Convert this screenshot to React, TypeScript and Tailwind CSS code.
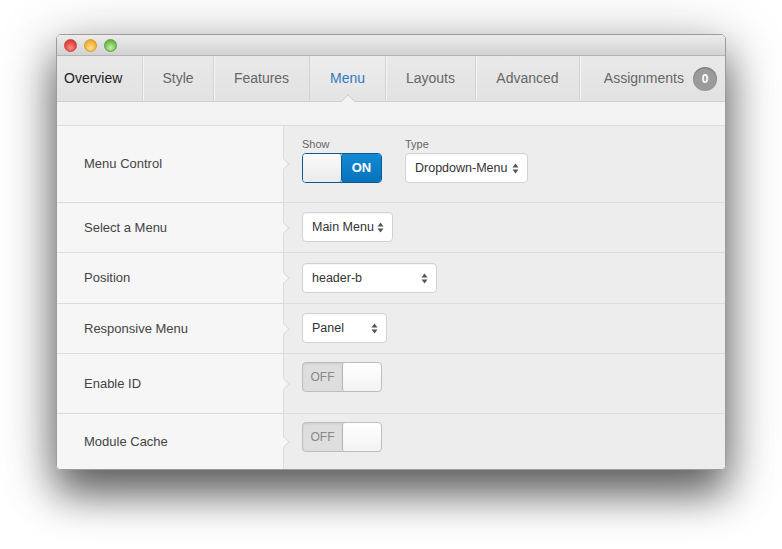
import type { ReactNode } from 'react';

const tabs = [
  { name: 'Overview', w: 'w-[86px]', cls: 'justify-start pl-[7px] text-[#222]' },
  { name: 'Style', w: 'w-[71px]', cls: 'justify-center text-[#666]' },
  { name: 'Features', w: 'w-[96px]', cls: 'justify-center text-[#666]' },
  { name: 'Menu', w: 'w-[76px]', cls: 'justify-center text-[#3479bd]', active: true },
  { name: 'Layouts', w: 'w-[90px]', cls: 'justify-center text-[#666]' },
  { name: 'Advanced', w: 'w-[104px]', cls: 'justify-center text-[#666]' },
];

function SelectArrows() {
  return (
    <svg width="7" height="11" viewBox="0 0 7 11" className="shrink-0">
      <path d="M3.5 0.5 L6.5 4.5 L0.5 4.5 Z" fill="#555" />
      <path d="M3.5 10.5 L6.5 6.5 L0.5 6.5 Z" fill="#555" />
    </svg>
  );
}

function Select({ value, width }: { value: string; width: string }) {
  return (
    <div
      className={`${width} h-[30px] flex items-center justify-between pl-[9px] pr-[8px] bg-white border border-[#d2d2d2] rounded-[4px] shadow-[inset_0_1px_1px_rgba(0,0,0,0.04)] text-[12.5px] text-[#333]`}
    >
      <span>{value}</span>
      <SelectArrows />
    </div>
  );
}

function ToggleOn() {
  return (
    <div className="w-[80px] h-[30px] flex rounded-[4px] border border-[#0b5a92] overflow-hidden">
      <div className="w-[39px] h-full bg-gradient-to-b from-[#fbfbfb] to-[#eaeaea] border-r border-[#0b5a92] rounded-r-[3px]" />
      <div className="flex-1 flex items-center justify-center bg-gradient-to-b from-[#148ad6] to-[#0672bb] text-white text-[13px] font-bold">
        ON
      </div>
    </div>
  );
}

function ToggleOff() {
  return (
    <div className="w-[80px] h-[30px] flex rounded-[4px] border border-[#bdbdbd] overflow-hidden bg-[#dedede]">
      <div className="w-[39px] flex items-center justify-center text-[12px] text-[#888] shadow-[inset_0_1px_2px_rgba(0,0,0,0.08)]">
        OFF
      </div>
      <div className="flex-1 h-full bg-gradient-to-b from-white to-[#f3f3f3] border-l border-[#b5b5b5] rounded-[3px]" />
    </div>
  );
}

function Row({ label, height, pt, children, last }: { label: string; height: string; pt: string; children: ReactNode; last?: boolean }) {
  return (
    <div className={`flex ${height} ${last ? '' : 'border-b border-[#dcdcdc]'}`}>
      <div className="w-[226px] shrink-0 flex items-center pl-[27px] bg-[#f6f6f6] text-[13px] text-[#444] relative">
        {label}
        <div className="absolute right-[-5px] top-1/2 -mt-[4px] w-[8px] h-[8px] rotate-45 bg-[#f6f6f6] border-t border-r border-[#dcdcdc]" />
      </div>
      <div className={`flex-1 bg-[#ededed] border-l border-[#dcdcdc] pl-[18px] ${pt}`}>{children}</div>
    </div>
  );
}

export default function App() {
  return (
    <div className="w-[782px] h-[549px] bg-white pt-[34px] pl-[56px] overflow-hidden" style={{ fontFamily: '"Liberation Sans", Arial, sans-serif' }}>
      <div className="w-[670px] h-[436px] flex flex-col rounded-[5px] overflow-hidden border border-[#9c9c9c] shadow-[0_24px_40px_rgba(0,0,0,0.55),0_8px_60px_rgba(0,0,0,0.25)]">
        {/* title bar */}
        <div className="h-[21px] shrink-0 flex items-center gap-[7px] pl-[7px] bg-gradient-to-b from-[#ececec] to-[#d2d2d2] border-b border-[#b4b4b4]">
          <span className="w-[13px] h-[13px] rounded-full border border-[#c2423c] bg-[radial-gradient(circle_at_50%_70%,#ff8c85,#e2463f_60%,#c93630)]" />
          <span className="w-[13px] h-[13px] rounded-full border border-[#d39a2c] bg-[radial-gradient(circle_at_50%_70%,#ffe08a,#f5b43a_60%,#dc9a23)]" />
          <span className="w-[13px] h-[13px] rounded-full border border-[#5e9b3f] bg-[radial-gradient(circle_at_50%_70%,#c6f09e,#76c152_60%,#5aa13a)]" />
        </div>

        {/* tabs */}
        <div className="h-[46px] shrink-0 flex bg-gradient-to-b from-[#e9e9e9] to-[#e2e2e2] border-b border-[#cfcfcf] text-[14px]">
          {tabs.map((t) => (
            <div
              key={t.name}
              className={`${t.w} relative flex items-center border-r border-[#d3d3d3] shadow-[1px_0_0_rgba(255,255,255,0.6)] ${t.cls} ${t.active ? 'bg-gradient-to-b from-[#ededed] to-[#e4e4e4]' : ''}`}
            >
              {t.name}
              {t.active && (
                <div className="absolute bottom-[-5px] left-1/2 -ml-[5px] w-[10px] h-[10px] rotate-45 bg-[#f3f3f3] border-t border-l border-[#cfcfcf]" />
              )}
            </div>
          ))}
          <div className="flex-1 flex items-center justify-end pr-[8px] gap-[9px] text-[#666]">
            Assignments
            <span className="w-[24px] h-[24px] rounded-full bg-[#9b9b9b] text-white text-[12px] font-bold flex items-center justify-center shadow-[inset_0_1px_2px_rgba(0,0,0,0.25)]">
              0
            </span>
          </div>
        </div>

        {/* strip */}
        <div className="h-[24px] shrink-0 bg-[#f3f3f3] border-b border-[#dcdcdc]" />

        {/* rows */}
        <div className="flex-1 flex flex-col">
          <Row label="Menu Control" height="h-[77px]" pt="pt-[12px]">
            <div className="flex gap-[23px]">
              <div className="flex flex-col gap-[3px]">
                <span className="text-[11px] text-[#666] leading-[12px]">Show</span>
                <ToggleOn />
              </div>
              <div className="flex flex-col gap-[3px]">
                <span className="text-[11px] text-[#666] leading-[12px]">Type</span>
                <Select value="Dropdown-Menu" width="w-[123px]" />
              </div>
            </div>
          </Row>
          <Row label="Select a Menu" height="h-[50px]" pt="pt-[9px]">
            <Select value="Main Menu" width="w-[91px]" />
          </Row>
          <Row label="Position" height="h-[51px]" pt="pt-[10px]">
            <Select value="header-b" width="w-[135px]" />
          </Row>
          <Row label="Responsive Menu" height="h-[50px]" pt="pt-[9px]">
            <Select value="Panel" width="w-[85px]" />
          </Row>
          <Row label="Enable ID" height="h-[60px]" pt="pt-[8px]">
            <ToggleOff />
          </Row>
          <Row label="Module Cache" height="flex-1" pt="pt-[8px]" last>
            <ToggleOff />
          </Row>
        </div>
      </div>
    </div>
  );
}
